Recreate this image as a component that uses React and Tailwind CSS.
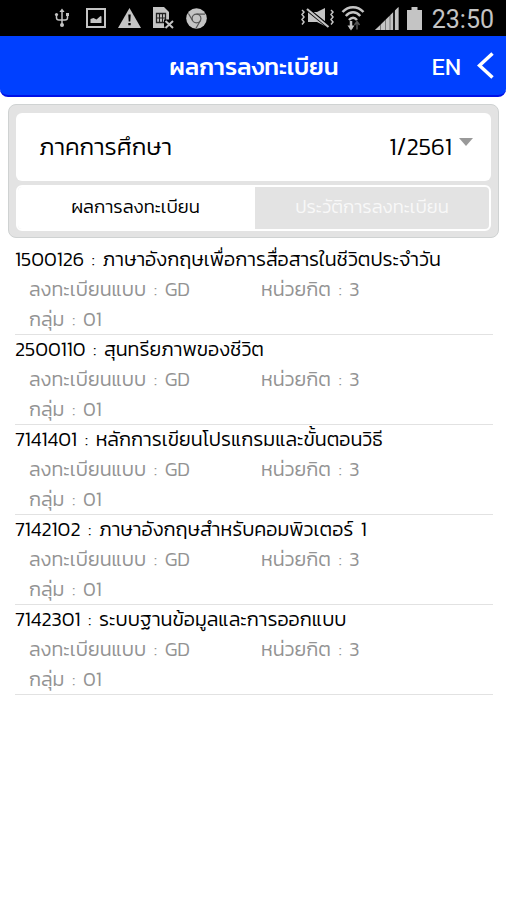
import React from 'react';

const courses = [
  { code: '1500126', name: 'ภาษาอังกฤษเพื่อการสื่อสารในชีวิตประจำวัน', type: 'GD', credit: 3, group: '01' },
  { code: '2500110', name: 'สุนทรียภาพของชีวิต', type: 'GD', credit: 3, group: '01' },
  { code: '7141401', name: 'หลักการเขียนโปรแกรมและขั้นตอนวิธี', type: 'GD', credit: 3, group: '01' },
  { code: '7142102', name: 'ภาษาอังกฤษสำหรับคอมพิวเตอร์ 1', type: 'GD', credit: 3, group: '01' },
  { code: '7142301', name: 'ระบบฐานข้อมูลและการออกแบบ', type: 'GD', credit: 3, group: '01' },
];

const UsbIcon = () => (
  <svg width="16" height="20" viewBox="0 0 16 20" fill="none" stroke="#c4c4c4" strokeWidth="1.5">
    <path d="M8 3v14M2.5 6.5v3.2c0 1.5 1 2.3 2.5 2.3h6c1.5 0 2.5-.8 2.5-2.3V6.5" />
    <path d="M8 .5l2.6 3.5H5.4z" fill="#c4c4c4" stroke="none" />
    <circle cx="2.5" cy="6.5" r="1.6" fill="#c4c4c4" stroke="none" />
    <path d="M12 5h3v3h-3z" fill="#c4c4c4" stroke="none" />
    <circle cx="8" cy="17" r="2" fill="#c4c4c4" stroke="none" />
  </svg>
);

const ImageIcon = () => (
  <svg width="20" height="20" viewBox="0 0 20 20" fill="#c4c4c4">
    <path d="M1 1h18v18H1z" fill="none" stroke="#c4c4c4" strokeWidth="2" />
    <path d="M4.5 15v-4l3-1 3 1.5 4-3.5 1 .5V15z" />
  </svg>
);

const WarningIcon = () => (
  <svg width="23" height="20" viewBox="0 0 23 20">
    <path d="M11.5 0L23 20H0z" fill="#c4c4c4" />
    <path d="M10.3 6.5h2.4l-.4 7h-1.6zM10.3 15h2.4v2.3h-2.4z" fill="#000" />
  </svg>
);

const SimIcon = () => (
  <svg width="21" height="22" viewBox="0 0 21 22">
    <path d="M0 0h11l5 5v16H0z" fill="#c4c4c4" />
    <path d="M3.5 6.5h9v9h-9z" fill="none" stroke="#222" strokeWidth="1.3" />
    <path d="M6.5 6.5v9M9.5 6.5v9M3.5 11h9" stroke="#222" strokeWidth="1.1" fill="none" />
    <path d="M11 12.5h10V22H12l-1-3z" fill="#000" />
    <path d="M12.5 14l7.5 7M20 14l-7.5 7" stroke="#c4c4c4" strokeWidth="2" />
  </svg>
);

const ChromeIcon = () => (
  <svg width="21" height="21" viewBox="0 0 21 21">
    <circle cx="10.5" cy="10.5" r="10.3" fill="#c4c4c4" />
    <circle cx="10.5" cy="10.5" r="4.4" fill="none" stroke="#555" strokeWidth="1.2" />
    <path d="M10.5 6.1h8.5M6.7 12.7L2.4 5.5M14.3 12.7L10 20.3" stroke="#555" strokeWidth="1.2" />
  </svg>
);

const MuteIcon = () => (
  <svg width="34" height="22" viewBox="0 0 34 22" fill="none" stroke="#c4c4c4" strokeWidth="1.5">
    <path d="M1 3l2 2-2 2.5 2 2.5-2 2.5 2 2.5-2 2.5M30 3l2 2-2 2.5 2 2.5-2 2.5 2 2.5-2 2.5" />
    <path d="M7 5h9l8-4v18l-8-4H7z" fill="#c4c4c4" stroke="none" />
    <path d="M6 2l22 18" stroke="#000" strokeWidth="4" />
    <path d="M6 2l21.5 18" strokeWidth="2.2" />
  </svg>
);

const WifiIcon = () => (
  <svg width="24" height="26" viewBox="0 0 24 26" fill="none" stroke="#c4c4c4" strokeWidth="2.5">
    <path d="M1.5 7c6-6.5 15-6.5 21 0M4.8 11c4.5-5 10-5 14.4 0M8 15c2.7-3 5.5-3 8 0" />
    <path d="M10 16v8" />
    <path d="M6.5 20.5h7L10 25.5z" fill="#c4c4c4" stroke="none" />
    <path d="M16 17v7.5M13.5 20l2.5-3.5 2.5 3.5" stroke="#555" strokeWidth="1.5" />
  </svg>
);

const SignalIcon = () => (
  <svg width="24" height="23" viewBox="0 0 24 23" fill="#c4c4c4">
    <path d="M0 23L23.5 0v23z" fill="#777" />
    <path d="M0 23l5-4.5V23zM6 17.5l4-4V23H6zM11 12.5L14.500 9v14H11zM15.500 8L18 5.500V23h-2.500zM20 3.500L23.500 0v23H20z" />
    <path d="M19 3v20" stroke="#000" strokeWidth="1.5" />
  </svg>
);

const BatteryIcon = () => (
  <svg width="15" height="23" viewBox="0 0 15 23" fill="#c4c4c4">
    <path d="M4.5 0h6v3H15v20H0V3h4.5z" />
  </svg>
);

const StatusBar = () => (
  <div className="h-9 shrink-0 bg-black flex items-center justify-between pl-[54px] pr-3">
    <div className="flex items-center">
      <UsbIcon />
      <div className="ml-4"><ImageIcon /></div>
      <div className="ml-3"><WarningIcon /></div>
      <div className="ml-3"><SimIcon /></div>
      <div className="ml-3"><ChromeIcon /></div>
    </div>
    <div className="flex items-center">
      <MuteIcon />
      <div className="ml-1.5"><WifiIcon /></div>
      <div className="ml-2.5"><SignalIcon /></div>
      <div className="ml-2"><BatteryIcon /></div>
      <span className="ml-2.5 mt-1 font-['Roboto',sans-serif] text-[25px] leading-8 text-[#c4c4c4]">23:50</span>
    </div>
  </div>
);

const Header = () => (
  <header className="h-[61px] shrink-0 grid grid-cols-[1fr_auto_1fr] items-center bg-[#0040ff] border-b-2 border-[#0010e6] rounded-b-lg text-white">
    <h1 className="col-start-2 pt-0.5 ml-0.5 text-[24px] leading-none font-medium whitespace-nowrap">ผลการลงทะเบียน</h1>
    <div className="flex items-center justify-end pr-3">
      <span className="pt-0.5 text-[24px] leading-none">EN</span>
      <svg className="ml-4" width="17" height="27" viewBox="0 0 17 27" fill="none" stroke="#fff" strokeWidth="3.5">
        <path d="M15.5 1.5L2.5 13.5l13 12" />
      </svg>
    </div>
  </header>
);

const CourseRow = ({ course }) => (
  <li className="h-[90px] border-b border-[#e2e2e2] text-[19.8px] font-light [word-spacing:3px] whitespace-nowrap">
    <p className="leading-[28px] mb-px text-black">{course.code} : {course.name}</p>
    <div className="grid grid-cols-[232px_1fr] pl-3.5 leading-[30px] text-[#939393]">
      <span>ลงทะเบียนแบบ : {course.type}</span>
      <span>หน่วยกิต : {course.credit}</span>
      <span>กลุ่ม : {course.group}</span>
    </div>
  </li>
);

export default function App() {
  return (
    <div className="w-full h-[900px] flex flex-col bg-white overflow-hidden font-['Kanit','Prompt','Noto_Sans_Thai','Noto_Sans',sans-serif]">
      <StatusBar />
      <Header />

      <section className="mt-[7px] ml-2 mr-[7px] h-[134px] shrink-0 rounded-lg border border-[#cfd2d2] bg-[#e3e3e3] px-[7px] pt-2">
        <div className="h-[68px] flex items-center justify-between rounded-md bg-white pl-[23px] pr-[18px] text-[24px] font-light text-black">
          <span>ภาคการศึกษา</span>
          <div className="flex items-center">
            <span>1/2561</span>
            <svg className="ml-[7px] mb-2.5" width="14" height="8" viewBox="0 0 14 8">
              <path d="M0 0h14L7 8z" fill="#999" />
            </svg>
          </div>
        </div>
        <div className="mt-1 h-[46px] flex rounded-md border-2 border-white text-[18.5px] font-light overflow-hidden">
          <div className="w-[237px] flex items-center justify-center pr-0.5 pb-0.5 bg-white text-black">ผลการลงทะเบียน</div>
          <div className="flex-1 flex items-center justify-center pb-0.5 text-[#f8f8f8]">ประวัติการลงทะเบียน</div>
        </div>
      </section>

      <ul className="mt-[7px] ml-[15px] mr-[13px]">
        {courses.map((course) => (
          <CourseRow key={course.code} course={course} />
        ))}
      </ul>
    </div>
  );
}
